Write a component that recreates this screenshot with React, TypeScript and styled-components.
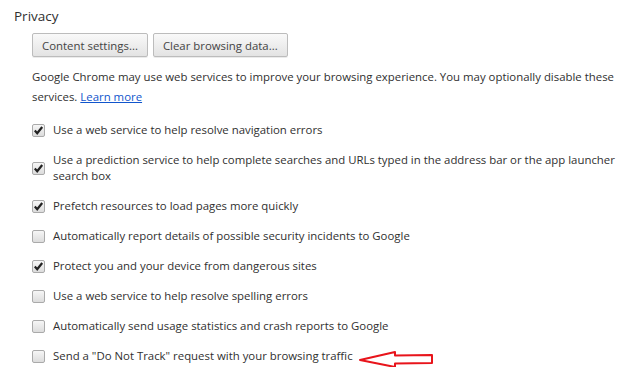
import React, { useState } from 'react'
import styled, { createGlobalStyle } from 'styled-components'

const GlobalStyle = createGlobalStyle`
  body {
    margin: 0;
    background: #fff;
    font-family: 'Open Sans', 'Liberation Sans', sans-serif;
    color: #303030;
  }
`

const Page = styled.div`
  position: relative;
  width: 644px;
  height: 367px;
  overflow: hidden;
  padding: 6px 0 0 14px;
  box-sizing: border-box;
`

const Title = styled.h3`
  margin: 0;
  font-size: 13.5px;
  font-weight: normal;
  line-height: 20px;
  color: #303030;
`

const Body = styled.div`
  padding-left: 18px;
  margin-top: 7px;
`

const ButtonRow = styled.div`
  display: flex;
  gap: 5px;
`

const Button = styled.button`
  height: 24px;
  padding: 0 9px;
  border: 1px solid #bcbcbc;
  border-radius: 2px;
  background: linear-gradient(#f9f9f9, #e3e3e3);
  color: #444;
  font-family: inherit;
  font-size: 11.4px;
  box-shadow: 0 1px 0 rgba(0, 0, 0, 0.08);
`

const Para = styled.p`
  margin: 10px 0 0;
  font-size: 11.4px;
  line-height: 20px;
  width: 590px;
`

const Link = styled.a`
  color: #15c;
  text-decoration: underline;
  margin-left: 3px;
`

const List = styled.div`
  display: flex;
  flex-direction: column;
  gap: 14px;
  margin-top: 15px;
`

const Row = styled.label`
  display: flex;
  align-items: center;
  gap: 8px;
  font-size: 11.4px;
  line-height: 16px;
`

const Box = styled.span<{ $on: boolean }>`
  flex: none;
  width: 13px;
  height: 13px;
  box-sizing: border-box;
  border: 1px solid #aaa;
  border-radius: 2px;
  background: linear-gradient(#f6f6f6, #dcdcdc);
  display: flex;
  align-items: center;
  justify-content: center;
`

const Label = styled.span`
  max-width: 575px;
`

const Arrow = styled.svg`
  position: absolute;
  left: 355px;
  top: 348px;
`

const items = [
  { text: 'Use a web service to help resolve navigation errors', on: true },
  {
    text: 'Use a prediction service to help complete searches and URLs typed in the address bar or the app launcher search box',
    on: true,
  },
  { text: 'Prefetch resources to load pages more quickly', on: true },
  { text: 'Automatically report details of possible security incidents to Google', on: false },
  { text: 'Protect you and your device from dangerous sites', on: true },
  { text: 'Use a web service to help resolve spelling errors', on: false },
  { text: 'Automatically send usage statistics and crash reports to Google', on: false },
  { text: 'Send a "Do Not Track" request with your browsing traffic', on: false },
]

function Check({ on }: { on: boolean }) {
  return (
    <Box $on={on}>
      {on && (
        <svg width="11" height="11" viewBox="0 0 11 11">
          <path d="M1.8 5.6 L4.2 8.2 L9.2 2" fill="none" stroke="#222" strokeWidth="2.2" />
        </svg>
      )}
    </Box>
  )
}

export default function App() {
  const [state, setState] = useState(items.map((i) => i.on))

  return (
    <Page>
      <GlobalStyle />
      <Title>Privacy</Title>
      <Body>
        <ButtonRow>
          <Button>Content settings...</Button>
          <Button>Clear browsing data...</Button>
        </ButtonRow>
        <Para>
          Google Chrome may use web services to improve your browsing experience. You may optionally
          disable these services.<Link href="#">Learn more</Link>
        </Para>
        <List>
          {items.map((item, i) => (
            <Row
              key={i}
              onClick={() => setState(state.map((v, j) => (j === i ? !v : v)))}
            >
              <Check on={state[i]} />
              <Label>{item.text}</Label>
            </Row>
          ))}
        </List>
      </Body>
      {/* red annotation arrow */}
      <Arrow width="82" height="20" viewBox="0 0 82 20">
        <path
          d="M5 12 L40 4 L40 7.5 L77 7 L77 15 L40 15.5 L40 19 Z"
          fill="none"
          stroke="#e8141b"
          strokeWidth="2"
          strokeLinejoin="round"
        />
      </Arrow>
    </Page>
  )
}
